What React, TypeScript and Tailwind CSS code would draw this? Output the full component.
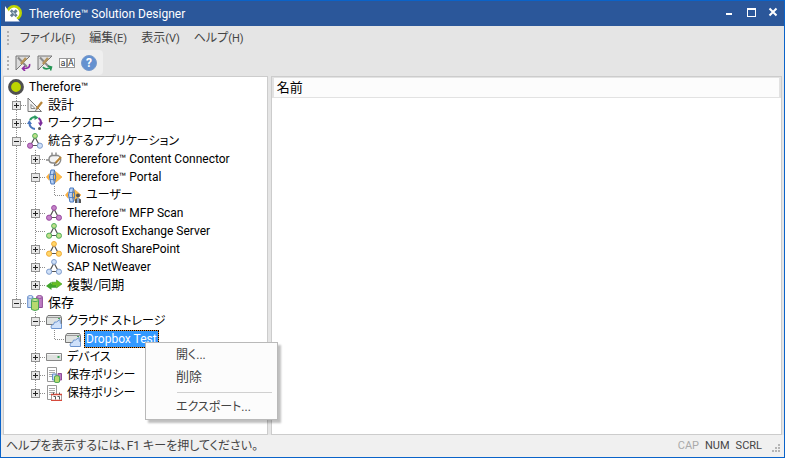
import type { ReactNode } from "react";

type NodeIcon =
  | "root" | "design" | "workflow" | "apps" | "connector" | "portal" | "user"
  | "mfp" | "exchange" | "sharepoint" | "sap" | "sync" | "storage" | "cloud"
  | "device" | "policy" | "retention";

interface TreeNode {
  label: string;
  icon: NodeIcon;
  state?: "open" | "closed";
  selected?: boolean;
  children?: TreeNode[];
}

const tree: TreeNode[] = [
  { label: "設計", icon: "design", state: "closed" },
  { label: "ワークフロー", icon: "workflow", state: "closed" },
  {
    label: "統合するアプリケーション",
    icon: "apps",
    state: "open",
    children: [
      { label: "Therefore™ Content Connector", icon: "connector", state: "closed" },
      {
        label: "Therefore™ Portal",
        icon: "portal",
        state: "open",
        children: [{ label: "ユーザー", icon: "user" }],
      },
      { label: "Therefore™ MFP Scan", icon: "mfp", state: "closed" },
      { label: "Microsoft Exchange Server", icon: "exchange" },
      { label: "Microsoft SharePoint", icon: "sharepoint", state: "closed" },
      { label: "SAP NetWeaver", icon: "sap", state: "closed" },
      { label: "複製/同期", icon: "sync", state: "closed" },
    ],
  },
  {
    label: "保存",
    icon: "storage",
    state: "open",
    children: [
      {
        label: "クラウド ストレージ",
        icon: "cloud",
        state: "open",
        children: [{ label: "Dropbox Test", icon: "cloud", selected: true }],
      },
      { label: "デバイス", icon: "device", state: "closed" },
      { label: "保存ポリシー", icon: "policy", state: "closed" },
      { label: "保持ポリシー", icon: "retention", state: "closed" },
    ],
  },
];

const menus = [
  { label: "ファイル", accel: "(F)" },
  { label: "編集", accel: "(E)" },
  { label: "表示", accel: "(V)" },
  { label: "ヘルプ", accel: "(H)" },
];

// Labels in kanji only are set one size up
const kanjiOnly = /^[\u4e00-\u9fff/]+$/;

function Triad({ top, left, right }: { top: string[]; left: string[]; right: string[] }) {
  return (
    <>
      <path d="M8 4L3.5 12.5H12.5Z" fill="none" stroke="#555" strokeWidth="1.2" />
      <circle cx="8" cy="2.9" r="2.4" fill={top[0]} stroke={top[1]} />
      <circle cx="3.1" cy="12.7" r="2.6" fill={left[0]} stroke={left[1]} />
      <circle cx="12.9" cy="12.7" r="2.6" fill={right[0]} stroke={right[1]} />
    </>
  );
}

const green = ["#c0e089", "#4fae5a"];
const purple = ["#c583c9", "#984aa0"];
const blue = ["#cfe0f8", "#7e9ccc"];
const orange = ["#ffd66b", "#efaa35"];

const globe = (
  <>
    <path d="M0 8L3 4.5V11.5Z" fill="#fbb040" />
    <path d="M4 4.5H9.5V2.5L16 8L9.5 13.5V11.5H4Z" fill="#fdbe4b" stroke="#f0a234" strokeWidth=".6" />
    <path d="M5 1Q2 8 5 15L8.5 15Q6 8 8.5 1Z" fill="#b9d2f5" stroke="#4a78bd" />
    <path d="M8.5 1.5Q11 8 8.5 14.5" fill="none" stroke="#4a78bd" />
    <path d="M3.8 5.5H9.3M3.8 10.5H9.3" stroke="#4a78bd" strokeWidth=".8" />
  </>
);

const page = (
  <>
    <path d="M1.5 .5H10.5V14.5H1.5Z" fill="#fff" stroke="#999" />
    <path d="M3 3.5H9M3 5.5H9M3 7.5H9M3 9.5H7" stroke="#aaa" />
  </>
);

const icons: Record<NodeIcon, ReactNode> = {
  root: <circle cx="8" cy="8" r="6.4" fill="#bdd400" stroke="#505050" strokeWidth="3" />,
  design: (
    <>
      <path d="M1 1V14.5H14.5Z" fill="#f2f2f2" stroke="#777" />
      <path d="M4 7.5V11.5H8Z" fill="#fff" stroke="#888" />
      <path d="M15 5L9.5 12" stroke="#b98638" strokeWidth="2.2" />
      <path d="M9.8 11.5L8.5 14" stroke="#777" />
    </>
  ),
  workflow: (
    <>
      <path d="M3 5A6 6 0 0 1 8.5 2" fill="none" stroke="#2c9a63" strokeWidth="2.2" />
      <path d="M7.5 0L11.5 2.8L7.5 5Z" fill="#2c9a63" />
      <path d="M11.5 3A6 6 0 0 1 14 8" fill="none" stroke="#7c2c9b" strokeWidth="2" />
      <path d="M11 7.5H16L13.5 11.5Z" fill="#7c2c9b" />
      <path d="M2.5 8A6 6 0 0 0 8 14" fill="none" stroke="#4976bd" strokeWidth="2.2" />
      <path d="M0 9L2.3 5L5 9Z" fill="#4976bd" />
      <circle cx="12.5" cy="13.5" r="1.5" fill="#555" />
    </>
  ),
  apps: <Triad top={green} left={purple} right={blue} />,
  connector: (
    <>
      <path d="M0 9H3M6 1.5V4.5M10 1.5V4.5" stroke="#888" strokeWidth="1.4" />
      <path d="M12.5 4.5H7Q3 4.5 3 8.5Q3 12 7 12H9" fill="#f3f3f3" stroke="#888" strokeWidth="1.4" />
      <path d="M12 4.5Q15.5 6 14.5 10Q13 14.5 8 14.5" fill="none" stroke="#888" strokeWidth="1.3" />
      <path d="M15 6L9.5 12" stroke="#b98638" strokeWidth="2" />
      <path d="M9.8 11.5L8 14.5" stroke="#666" />
    </>
  ),
  portal: globe,
  user: (
    <>
      {globe}
      <circle cx="13" cy="8.5" r="2" fill="#555" />
      <path d="M10 16V12.5Q13 9.5 16 12.5V16Z" fill="#555" />
      <path d="M12.2 11.3H13.8V16H12.2Z" fill="#9bbce8" />
    </>
  ),
  mfp: <Triad top={purple} left={purple} right={purple} />,
  exchange: <Triad top={green} left={green} right={green} />,
  sharepoint: <Triad top={orange} left={orange} right={orange} />,
  sap: <Triad top={blue} left={blue} right={blue} />,
  sync: (
    <>
      <path d="M0 9L5.5 4.8V7H10V10.8H5.5V13Z" fill="#3fa52b" />
      <path d="M16 7L10.5 3V5.2H6V8.6H10.5V11Z" fill="#68bf22" stroke="#3d9a24" strokeWidth=".6" />
    </>
  ),
  storage: (
    <>
      <path d="M.7 2.5V12.5H6V2.5Z" fill="#c9dbf4" stroke="#668cc8" />
      <path d="M9.5 2.5V12.5H15.4V2.5Z" fill="#bd7bc3" stroke="#8e4b98" />
      <ellipse cx="3.3" cy="2" rx="2.7" ry="1.4" fill="#e5effd" stroke="#668cc8" />
      <ellipse cx="12.5" cy="2" rx="2.9" ry="1.4" fill="#d4a5d7" stroke="#8e4b98" />
      <path d="M4.5 5V14.5Q8 16.5 11.5 14.5V5Z" fill="#b7d96f" stroke="#4aa558" />
      <ellipse cx="8" cy="5" rx="3.5" ry="1.5" fill="#cde899" stroke="#4aa558" />
    </>
  ),
  cloud: (
    <>
      <path d="M.5 4.5L2 2.5H14.5L15.5 4.5V11.5H.5Z" fill="#dfe2e0" stroke="#777" />
      <path d="M1 4.5H15" stroke="#999" />
      <path d="M12 5.5H14" stroke="#48a45a" />
      <path d="M5.5 15.5Q4 12 7.5 11.5Q8 8 10.5 9L14 6.5Q14 10.5 15.5 11.5V15.5Z" fill="#cfe1fa" stroke="#6b94cf" />
    </>
  ),
  device: (
    <>
      <path d="M.5 4.5H15.5V11.5H.5Z" fill="#dfe1df" stroke="#888" />
      <path d="M1 5.5H15" stroke="#f5f5f5" />
      <path d="M11.5 8H13.5" stroke="#39a355" strokeWidth="2" />
    </>
  ),
  policy: (
    <>
      {page}
      <path d="M6.5 7V13H10V7Z" fill="#c9dbf4" stroke="#668cc8" />
      <path d="M12 6.5H15.5V13H12Z" fill="#bd7bc3" stroke="#8e4b98" />
      <path d="M8.5 9.5Q11 7.5 13.5 9.5V15Q11 16.5 8.5 15Z" fill="#b7d96f" stroke="#4aa558" />
    </>
  ),
  retention: (
    <>
      {page}
      <path d="M5.5 9.5H15.5V15.5H5.5Z" fill="#fff" stroke="#a99" />
      <path d="M5 9.5H16M5 15.5H16" stroke="#d64a3c" strokeWidth="1.4" />
      <path d="M7.5 7.5V9.5M13.5 7.5V9.5M7.5 11.5H9.5V14.5M11.5 11.5H13.5V14.5" fill="none" stroke="#555" />
    </>
  ),
};

function Icon({ name }: { name: NodeIcon }) {
  return (
    <span className="w-[19px] shrink-0 pl-px">
      <svg viewBox="0 0 16 16" className="size-4" aria-hidden="true">{icons[name]}</svg>
    </span>
  );
}

// One 19x18 cell of the dotted tree lines
function Guide({ up, down, right }: { up?: boolean; down?: boolean; right?: boolean }) {
  return (
    <svg viewBox="0 0 19 18" className="h-[18px] w-[19px] shrink-0" shapeRendering="crispEdges" aria-hidden="true">
      <g stroke="#8c8c8c" strokeDasharray="1 1">
        {up && <path d="M9.5 0V10" />}
        {down && <path d="M9.5 10V18" />}
        {right && <path d="M10 9.5H19" />}
      </g>
    </svg>
  );
}

function Expander({ state, label }: { state: "open" | "closed"; label: string }) {
  return (
    <button aria-label={label} aria-expanded={state === "open"} className="absolute top-[5px] left-[5px] size-[9px]">
      <svg viewBox="0 0 9 9" className="size-[9px]" shapeRendering="crispEdges">
        <path d="M.5 .5H8.5V8.5H.5Z" fill="#e8e8e8" stroke="#919191" />
        <path d={state === "open" ? "M2 4.5H7" : "M2 4.5H7M4.5 2V7"} stroke="#222" />
      </svg>
    </button>
  );
}

function ContextMenu() {
  return (
    <div
      role="menu"
      className="absolute top-3 left-[61px] z-10 w-[133px] border border-[#b9b9b9] bg-[#fcfcfc] py-px text-xs text-[#444] shadow-[3px_3px_2px_rgba(0,0,0,0.25)]"
    >
      <button role="menuitem" className="block h-[22px] w-full pl-[30px] text-left">開く...</button>
      <button role="menuitem" className="block h-[22px] w-full pl-[30px] text-left text-[13px]">削除</button>
      <div role="separator" className="mt-1 mr-[5px] mb-[3px] ml-[31px] h-px bg-[#d0d0d0]" />
      <button role="menuitem" className="block h-[22px] w-full pl-[30px] text-left">エクスポート...</button>
    </div>
  );
}

function Label({ node }: { node: TreeNode }) {
  if (node.selected) {
    return (
      <span className="relative ml-px">
        <span className="block border border-dotted border-black bg-[#e08a2e]">
          <span className="block bg-[#3399ff] px-px leading-4 text-white">{node.label}</span>
        </span>
        <ContextMenu />
      </span>
    );
  }
  return (
    <span className={kanjiOnly.test(node.label) ? "ml-[3px] text-[13px] leading-[18px]" : "ml-[3px] leading-[18px]"}>
      {node.label}
    </span>
  );
}

function Branch({ nodes, guides }: { nodes: TreeNode[]; guides: boolean[] }) {
  return (
    <ul role="group">
      {nodes.map((node, i) => {
        const last = i === nodes.length - 1;
        return (
          <li key={node.label} role="treeitem" aria-selected={!!node.selected}>
            <div className="flex h-[18px] items-center whitespace-nowrap">
              {guides.map((line, g) => (
                <Guide key={g} up={line} down={line} />
              ))}
              <span className="relative shrink-0">
                <Guide up down={!last} right />
                {node.state && <Expander state={node.state} label={node.label} />}
              </span>
              <Icon name={node.icon} />
              <Label node={node} />
            </div>
            {node.children && <Branch nodes={node.children} guides={[...guides, !last]} />}
          </li>
        );
      })}
    </ul>
  );
}

function Grip() {
  return (
    <svg viewBox="0 0 2 14" className="h-3.5 w-0.5 shrink-0" shapeRendering="crispEdges" aria-hidden="true">
      <path d="M1 0V14" stroke="#b0b0b0" strokeWidth="2" strokeDasharray="2 2" />
    </svg>
  );
}

function SquareTool({ arrow }: { arrow: ReactNode }) {
  return (
    <svg viewBox="0 0 16 16" className="size-4" aria-hidden="true">
      <path d="M1 1H15L1 15Z" fill="#dcdcdc" stroke="#777" />
      <path d="M3 2.5L12 12" stroke="#8a8a8a" strokeWidth="2" />
      <path d="M11 3L6 9" stroke="#b5935a" strokeWidth="2.6" />
      {arrow}
    </svg>
  );
}

function Toolbar() {
  return (
    <div className="flex h-[25px] w-[100px] items-center rounded-r bg-[#efefef] pl-1">
      <Grip />
      <button aria-label="Undo design" className="ml-1.5">
        <SquareTool
          arrow={<path d="M14.5 9Q15.5 14 8 13.5M10 11L7.5 13.5L10 16" fill="none" stroke="#8f2ca5" strokeWidth="1.6" />}
        />
      </button>
      <button aria-label="Redo design" className="ml-1.5">
        <SquareTool
          arrow={<path d="M6 12Q8 15.5 14 12.5M11 11L14.5 12L13.5 15.5" fill="none" stroke="#249654" strokeWidth="1.6" />}
        />
      </button>
      <button aria-label="Translate" className="ml-1.5 flex h-2.5 text-[9px] leading-2 text-[#333]">
        <span className="w-2 border border-[#999] bg-white">a</span>
        <span className="w-2 border border-[#999] bg-white">A</span>
      </button>
      <button aria-label="Help" className="ml-1.5 flex size-4 items-center justify-center rounded-full border border-[#7a9bcb] bg-[#6491d0] text-xs font-bold text-white">
        ?
      </button>
    </div>
  );
}

function TitleBar() {
  return (
    <header className="flex h-[25px] items-center bg-[#2b579a] pr-1.5 pl-1 text-white">
      <svg viewBox="0 0 16 16" className="size-[17px]" aria-hidden="true">
        <circle cx="8.5" cy="7.5" r="6.3" fill="#fff" stroke="#bdd400" strokeWidth="2.4" />
        <path d="M0 1V15.5H14L10.5 12L5 8Z" fill="#fff" />
        <path d="M5.5 5L11 10.5M11 5L5.5 10.5" stroke="#657d92" strokeWidth="2.6" />
        <path d="M7 6.5L9.5 9" stroke="#b9cde0" strokeWidth="1.2" />
      </svg>
      <h1 className="ml-[7px] text-xs">Therefore™ Solution Designer</h1>
      <div className="mb-1 ml-auto flex gap-3">
        <button aria-label="Minimize">
          <svg viewBox="0 0 10 10" className="size-2.5" shapeRendering="crispEdges"><path d="M2 7H8" stroke="#fff" strokeWidth="2" /></svg>
        </button>
        <button aria-label="Maximize">
          <svg viewBox="0 0 10 10" className="size-2.5" shapeRendering="crispEdges">
            <path d="M1.5 1V9.5H9.5V1" fill="none" stroke="#fff" />
            <path d="M1 2H10" stroke="#fff" strokeWidth="2" />
          </svg>
        </button>
        <button aria-label="Close">
          <svg viewBox="0 0 10 10" className="size-2.5"><path d="M1.5 1.5L8.5 8.5M8.5 1.5L1.5 8.5" stroke="#fff" strokeWidth="2" /></svg>
        </button>
      </div>
    </header>
  );
}

export default function App() {
  return (
    <div className="flex min-h-screen flex-col border border-[#0a63c9] bg-[#e5e5e5] font-[Roboto,'Noto_Sans_CJK_JP',sans-serif] text-xs text-black [font-feature-settings:'palt']">
      <TitleBar />
      <nav className="flex h-6 items-center pl-1.5 text-[#444]">
        <Grip />
        <div className="ml-[11px] flex gap-[14px]">
          {menus.map(m => (
            <button key={m.label} className="text-xs">
              {m.label}
              <span className="text-[11px]">{m.accel}</span>
            </button>
          ))}
        </div>
      </nav>
      <div className="pl-0.5">
        <Toolbar />
      </div>

      <main className="mt-px flex grow gap-[3px] px-0.5">
        <section className="w-[34%] border border-[#cccccc] bg-white py-px pl-[3px]">
          <div role="tree">
            <div className="flex h-[18px] items-center">
              <Icon name="root" />
              <span className="ml-[3px]">Therefore™</span>
            </div>
            <Branch nodes={tree} guides={[]} />
          </div>
        </section>
        <section className="grow border border-[#cccccc] bg-white">
          <table className="w-full text-left">
            <thead>
              <tr>
                <th className="h-5 border-2 border-t border-b border-[#e2e2e2] bg-[#fcfcfc] pl-[3px] text-[13px] leading-[18px] font-normal">
                  名前
                </th>
              </tr>
            </thead>
          </table>
        </section>
      </main>

      <footer className="flex h-[22px] items-center bg-[#f0f0f0] pr-1 pl-[5px] text-[#444]">
        <span>ヘルプを表示するには、F1 キーを押してください。</span>
        <div className="ml-auto flex items-center gap-1.5 text-[11px]">
          <span className="text-[#aaa]">CAP</span>
          <span>NUM</span>
          <span>SCRL</span>
          <svg viewBox="0 0 8 8" className="mt-1 ml-1 size-2" aria-hidden="true">
            <path d="M6 0H8V2H6ZM3 3H5V5H3ZM6 3H8V5H6ZM0 6H2V8H0ZM3 6H5V8H3ZM6 6H8V8H6Z" fill="#b5b5b5" />
          </svg>
        </div>
      </footer>
    </div>
  );
}
